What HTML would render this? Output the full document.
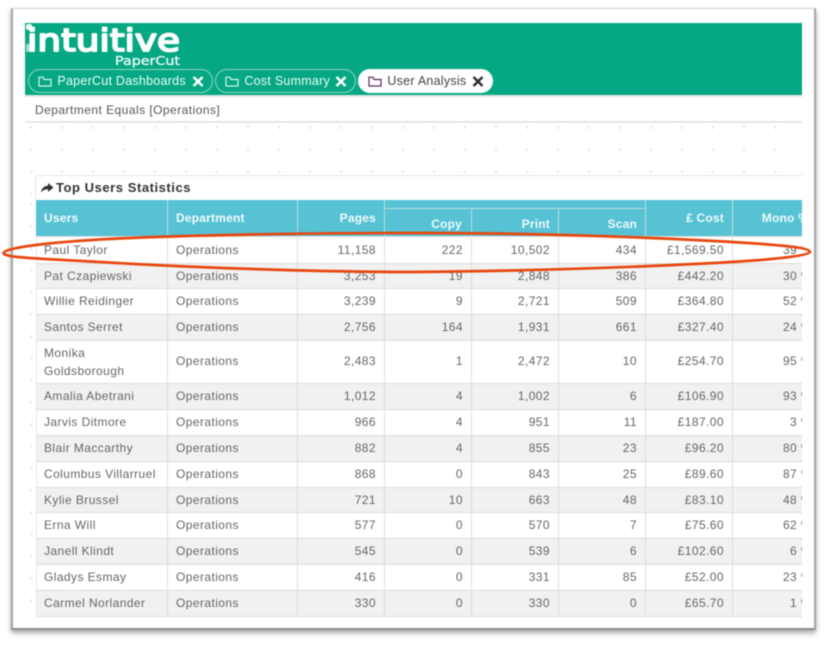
<!DOCTYPE html>
<html><head><meta charset="utf-8"><style>
html,body{margin:0;padding:0;width:828px;height:646px;overflow:hidden;background:#fff;font-family:"Liberation Sans",sans-serif}
#card{position:absolute;left:11px;top:8px;width:805px;height:622px;background:#fff;border:1px solid #d4d4d4;border-left:2px solid #a6a6a6;border-right:2px solid #a6a6a6;border-bottom:2px solid #8f8f8f;box-sizing:border-box;box-shadow:0 3px 5px rgba(0,0,0,.35)}
#wrap{position:absolute;left:0;top:0;width:828px;height:646px;filter:blur(.5px)}
#teal{position:absolute;left:25px;top:23px;width:777px;height:72px;background:#05a883}
.ln{position:absolute;left:25px;width:777px;height:2px;background:#e6e6e6}
#dots{position:absolute;left:25px;top:123px;width:777px;height:78px;background-image:radial-gradient(circle at 6px 4.5px,#ececec 1.2px,transparent 1.7px);background-size:31px 22px}
#dots2{position:absolute;left:25px;top:201px;width:11px;height:420px;background-image:radial-gradient(circle at 6px 3.5px,#ececec 1.2px,transparent 1.7px);background-size:31px 22px}
.tab{position:absolute;top:69px;height:24px;box-sizing:border-box;border:1px solid #8fd6c4;border-radius:12px;color:#eefaf7;font-size:12.5px;line-height:22px;letter-spacing:.25px;white-space:nowrap}
.tab.on{background:#fff;border-color:#fff;color:#444}
.tab span{position:absolute;left:28.4px;top:0}
.tab svg{position:absolute;top:6px}
#dept{position:absolute;left:35px;top:103px;font-size:12px;letter-spacing:.46px;color:#555}
#ptitle{position:absolute;left:35px;top:175px;width:767px;height:26px;box-sizing:border-box;border:1px solid #e6e6e6;border-bottom:0;border-right:0;border-radius:4px 0 0 0;background:#fff}
#ptitle b{position:absolute;left:20px;top:4px;font-size:13px;letter-spacing:.55px;color:#333;white-space:nowrap}
#clip{position:absolute;left:36px;top:200px;width:766px;height:417px;overflow:hidden}
.h{position:absolute;background:#57c2d4;color:#eefafc;font-size:12px;font-weight:bold;letter-spacing:.2px;box-sizing:border-box;border-right:1px solid #bcd9de;white-space:nowrap}
.h i{position:absolute;font-style:normal}
table{position:absolute;left:0;top:36px;border-collapse:collapse;table-layout:fixed;width:784px;font-size:12px;letter-spacing:.42px;color:#666}
td{border:1px solid #dcdcdc;padding:0 8px;box-sizing:border-box;white-space:nowrap;overflow:hidden;vertical-align:middle;height:26px}
td:first-child{border-left:1px solid #e8e8e8;padding-left:7px}
tr:nth-child(even) td{background:#f1f1f1}
td.n{text-align:right}
td.w{white-space:normal;line-height:18px}
tr:not(.a):not(.b) td:not(.w){padding-bottom:2px}
tr.a td{height:27px}
tr.b td{height:25px}
tr.c td{height:43px}
svg.o{position:absolute;left:0;top:0}
</style></head><body>
<div id="wrap">
<div id="card"></div>
<div id="teal"></div>
<div class="ln" style="top:95px;height:1.5px"></div>
<div class="ln" style="top:121px"></div>
<div id="dots"></div>
<div id="dots2"></div>
<svg class="o" width="828" height="100" style="pointer-events:none">
<rect x="26" y="24" width="6" height="6" rx="2" fill="#fff" opacity=".9"/>
<rect x="26" y="44" width="4" height="8" rx="1" fill="#fff" opacity=".6"/>
<text x="27" y="51" font-family="'DejaVu Sans',sans-serif" font-size="31" fill="#fff" stroke="#fff" stroke-width="1.8" stroke-linejoin="round" textLength="153" lengthAdjust="spacingAndGlyphs">intuitive</text>
<text x="115" y="65" font-family="'DejaVu Sans',sans-serif" font-size="12.5" fill="#eefaf7" stroke="#eefaf7" stroke-width=".3" textLength="65" lengthAdjust="spacingAndGlyphs">PaperCut</text>
</svg>
<div class="tab" style="left:28px;width:185px"><svg style="left:9px" width="14" height="11" viewBox="0 0 14 11" fill="none" stroke="#d8f3ec" stroke-width="1.2"><path d="M1 2V10H13V3.5H6L5 1.2H1Z"/></svg><span>PaperCut Dashboards</span><svg style="left:163px;top:5.5px" width="12" height="11" viewBox="0 0 12 11" stroke="#fff" stroke-width="2.6" fill="none"><path d="M1.5 1L10.5 10M10.5 1L1.5 10"/></svg></div>
<div class="tab" style="left:215px;width:141px"><svg style="left:9px" width="14" height="11" viewBox="0 0 14 11" fill="none" stroke="#d8f3ec" stroke-width="1.2"><path d="M1 2V10H13V3.5H6L5 1.2H1Z"/></svg><span>Cost Summary</span><svg style="left:119px;top:5.5px" width="12" height="11" viewBox="0 0 12 11" stroke="#fff" stroke-width="2.6" fill="none"><path d="M1.5 1L10.5 10M10.5 1L1.5 10"/></svg></div>
<div class="tab on" style="left:358px;width:135px"><svg style="left:9px" width="14" height="11" viewBox="0 0 14 11" fill="none" stroke="#5a2a5e" stroke-width="1.2"><path d="M1 2V10H13V3.5H6L5 1.2H1Z"/></svg><span>User Analysis</span><svg style="left:113px;top:5.5px" width="12" height="11" viewBox="0 0 12 11" stroke="#333" stroke-width="2.6" fill="none"><path d="M1.5 1L10.5 10M10.5 1L1.5 10"/></svg></div>
<div id="dept">Department Equals [Operations]</div>
<div id="ptitle"><svg style="position:absolute;left:4px;top:6px" width="14" height="12" viewBox="0 0 14 12" fill="#333"><path d="M8 1L13.5 5.5L8 10V7.2C5 7.2 3 8 1 10.5C1.5 6.5 4 3.8 8 3.6Z"/></svg><b>Top Users Statistics</b></div>
<div id="clip">
<div class="h" style="left:0;top:0;width:132px;height:36px"><i style="left:8px;top:11px">Users</i></div>
<div class="h" style="left:132px;top:0;width:130px;height:36px"><i style="left:8px;top:11px">Department</i></div>
<div class="h" style="left:262px;top:0;width:87px;height:36px"><i style="right:8px;top:11px">Pages</i></div>
<div class="h" style="left:349px;top:0;width:261px;height:9px;border-bottom:1px solid #bcd9de"></div>
<div class="h" style="left:349px;top:9px;width:87px;height:27px"><i style="right:9px;top:8px">Copy</i></div>
<div class="h" style="left:436px;top:9px;width:87px;height:27px"><i style="right:8px;top:8px">Print</i></div>
<div class="h" style="left:523px;top:9px;width:87px;height:27px"><i style="right:8px;top:8px">Scan</i></div>
<div class="h" style="left:610px;top:0;width:87px;height:36px"><i style="right:8px;top:11px">£ Cost</i></div>
<div class="h" style="left:697px;top:0;width:90px;height:36px"><i style="right:13px;top:11px">Mono %</i></div>
<table><colgroup><col style="width:131px"><col style="width:130px"><col style="width:87px"><col style="width:87px"><col style="width:87px"><col style="width:87px"><col style="width:87px"><col style="width:88px"></colgroup>
<tr class="a"><td>Paul Taylor</td><td>Operations</td><td class="n">11,158</td><td class="n">222</td><td class="n">10,502</td><td class="n">434</td><td class="n">£1,569.50</td><td class="n">39 %</td></tr>
<tr class="b"><td>Pat Czapiewski</td><td>Operations</td><td class="n">3,253</td><td class="n">19</td><td class="n">2,848</td><td class="n">386</td><td class="n">£442.20</td><td class="n">30 %</td></tr>
<tr><td>Willie Reidinger</td><td>Operations</td><td class="n">3,239</td><td class="n">9</td><td class="n">2,721</td><td class="n">509</td><td class="n">£364.80</td><td class="n">52 %</td></tr>
<tr><td>Santos Serret</td><td>Operations</td><td class="n">2,756</td><td class="n">164</td><td class="n">1,931</td><td class="n">661</td><td class="n">£327.40</td><td class="n">24 %</td></tr>
<tr class="c"><td class="w">Monika Goldsborough</td><td>Operations</td><td class="n">2,483</td><td class="n">1</td><td class="n">2,472</td><td class="n">10</td><td class="n">£254.70</td><td class="n">95 %</td></tr>
<tr><td>Amalia Abetrani</td><td>Operations</td><td class="n">1,012</td><td class="n">4</td><td class="n">1,002</td><td class="n">6</td><td class="n">£106.90</td><td class="n">93 %</td></tr>
<tr><td>Jarvis Ditmore</td><td>Operations</td><td class="n">966</td><td class="n">4</td><td class="n">951</td><td class="n">11</td><td class="n">£187.00</td><td class="n">3 %</td></tr>
<tr><td>Blair Maccarthy</td><td>Operations</td><td class="n">882</td><td class="n">4</td><td class="n">855</td><td class="n">23</td><td class="n">£96.20</td><td class="n">80 %</td></tr>
<tr><td>Columbus Villarruel</td><td>Operations</td><td class="n">868</td><td class="n">0</td><td class="n">843</td><td class="n">25</td><td class="n">£89.60</td><td class="n">87 %</td></tr>
<tr class="b"><td>Kylie Brussel</td><td>Operations</td><td class="n">721</td><td class="n">10</td><td class="n">663</td><td class="n">48</td><td class="n">£83.10</td><td class="n">48 %</td></tr>
<tr><td>Erna Will</td><td>Operations</td><td class="n">577</td><td class="n">0</td><td class="n">570</td><td class="n">7</td><td class="n">£75.60</td><td class="n">62 %</td></tr>
<tr><td>Janell Klindt</td><td>Operations</td><td class="n">545</td><td class="n">0</td><td class="n">539</td><td class="n">6</td><td class="n">£102.60</td><td class="n">6 %</td></tr>
<tr><td>Gladys Esmay</td><td>Operations</td><td class="n">416</td><td class="n">0</td><td class="n">331</td><td class="n">85</td><td class="n">£52.00</td><td class="n">23 %</td></tr>
<tr><td>Carmel Norlander</td><td>Operations</td><td class="n">330</td><td class="n">0</td><td class="n">330</td><td class="n">0</td><td class="n">£65.70</td><td class="n">1 %</td></tr>
</table>
</div>
<svg class="o" width="828" height="646" fill="none"><path d="M3.5 253C5 247 60 241 130 238C230 234 330 233 420 233C520 233 620 236 714 241C770 244 810 247 810 252C810 256 770 260 714 263C620 268 520 271 414 272C320 272 200 268 100 262C50 259 3 258 3.5 253Z" stroke="#e8470f" stroke-width="2.7"/></svg>
</div>
</body></html>
